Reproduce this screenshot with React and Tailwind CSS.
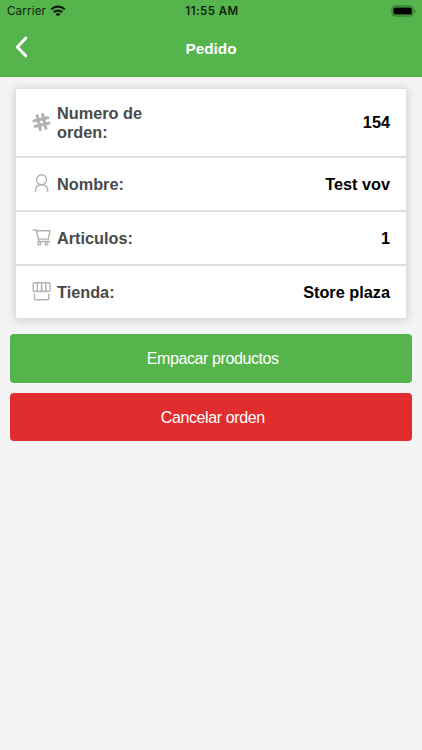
function HashIcon() {
    return (
        <svg viewBox="0 0 20 20" className="h-5 w-5" fill="none" stroke="#b2b2b2" strokeWidth="3" strokeLinecap="round">
            <g transform="rotate(-13 9.5 9)">
                <path d="M6.7 1.9v14.2M12.3 1.9v14.2M2.4 6.2h14.2M2.4 11.8h14.2" />
            </g>
        </svg>
    );
}

function PersonIcon() {
    return (
        <svg viewBox="0 0 20 20" className="h-5 w-5" fill="none" stroke="#b2b2b2" strokeWidth="1.4" strokeLinecap="round">
            <circle cx="9.6" cy="5.7" r="5" />
            <path d="M3.4 17.3c0-4.1 2.5-6.6 6.2-6.6s6.2 2.5 6.2 6.6" />
        </svg>
    );
}

function CartIcon() {
    return (
        <svg viewBox="0 0 20 20" className="h-5 w-5" fill="none" stroke="#b2b2b2" strokeWidth="1.4" strokeLinecap="round" strokeLinejoin="round">
            <path d="M1.4 2h2.8l2.7 11.5h10.7M4.4 2.8h13.7l-2 8.3H6.3" />
            <circle cx="7.2" cy="15.6" r="1.5" />
            <circle cx="14.6" cy="15.6" r="1.5" />
        </svg>
    );
}

function StoreIcon() {
    return (
        <svg viewBox="0 0 20 20" className="h-5 w-5" fill="none" stroke="#b2b2b2" strokeWidth="1.4" strokeLinecap="round" strokeLinejoin="round">
            <path d="M2.1.8h15l1 1.2v4.9a2.12 2.7 0 0 1-4.25 0 2.12 2.7 0 0 1-4.25 0 2.12 2.7 0 0 1-4.25 0 2.12 2.7 0 0 1-4.25 0V2zM5.35.8v6M9.6.8v6M13.85.8v6" />
            <path d="M2.5 12.1v4.7q0 1 1 1h12.3q1 0 1-1v-4.7" />
        </svg>
    );
}

const rows = [
    { label: "Numero de orden:", value: "154", icon: HashIcon, height: "h-[67px]" },
    { label: "Nombre:", value: "Test vov", icon: PersonIcon, height: "h-[52px]" },
    { label: "Articulos:", value: "1", icon: CartIcon, height: "h-[52px]" },
    { label: "Tienda:", value: "Store plaza", icon: StoreIcon, height: "h-[52px]" },
];

function StatusBar() {
    return (
        <div className="grid h-[22px] grid-cols-3 items-center pl-[7px] pr-[5px] font-['Inter',sans-serif] text-[11.5px] text-[#102310]">
            <div className="flex items-center gap-1">
                <span className="pt-px tracking-[0.2px]">Carrier</span>
                <svg viewBox="0 0 16 12" className="mb-px h-3 w-4" fill="none" stroke="#0b180b" strokeWidth="2.2">
                    <path d="M1.3 4.4a9.6 9.6 0 0 1 13.4 0M3.9 7.2a5.9 5.9 0 0 1 8.2 0" />
                    <path d="M8 11.6 5.6 9.2a3.4 3.4 0 0 1 4.8 0z" fill="#0b180b" stroke="none" />
                </svg>
            </div>
            <span className="pt-px text-center font-semibold tracking-[0.45px]">11:55 AM</span>
            <svg viewBox="0 0 26 12" className="mb-px h-3 w-[26px] justify-self-end">
                <rect x="1" y="1" width="21" height="10" rx="2.8" fill="none" stroke="#2f6a2b" />
                <rect x="2.4" y="2.4" width="18.4" height="7.2" rx="1.5" fill="#000" />
                <path d="M23.3 4.2c1.5.5 1.5 3.1 0 3.6z" fill="#2f6a2b" />
            </svg>
        </div>
    );
}

export default function App() {
    return (
        <main className="min-h-screen bg-[#f4f4f4] font-['Liberation_Sans',sans-serif]">
            <header className="h-[77px] bg-[#56b44c]">
                <StatusBar />
                <div className="grid h-[54px] grid-cols-[1fr_auto_1fr] items-center px-[15px]">
                    <button aria-label="Volver" className="-mt-1">
                        <svg viewBox="0 0 14 22" className="h-[22px] w-3.5" fill="none" stroke="#fff" strokeWidth="3" strokeLinecap="round" strokeLinejoin="round">
                            <path d="M10.7 2.2 2.3 11l8.4 8.8" />
                        </svg>
                    </button>
                    <h1 className="text-[15.3px] font-bold text-white">Pedido</h1>
                </div>
            </header>

            <section className="mx-[15px] mt-[11px] divide-y-2 divide-[#dedede] border border-[#dedede] bg-white shadow-[0_1px_9px_rgba(0,0,0,0.17)]">
                {rows.map(({ label, value, icon: Icon, height }) => (
                    <div key={label} className={`box-content flex items-center justify-between pl-4 pr-4 text-[16.3px] font-bold ${height}`}>
                        <div className="flex items-center gap-[5px]">
                            <Icon />
                            <span className="w-[100px] leading-[18.5px] text-[#4a4a4a]">{label}</span>
                        </div>
                        <span className="text-black">{value}</span>
                    </div>
                ))}
            </section>

            <div className="ml-2.5 mr-[10.5px] mt-[15px] flex flex-col gap-2.5 text-base tracking-[-0.4px] text-white">
                <button className="h-[48.5px] rounded bg-[#56b44c] pl-1 pt-0.5">Empacar productos</button>
                <button className="h-[48.5px] rounded bg-[#e22d2f] pl-1 pt-0.5">Cancelar orden</button>
            </div>
        </main>
    );
}
